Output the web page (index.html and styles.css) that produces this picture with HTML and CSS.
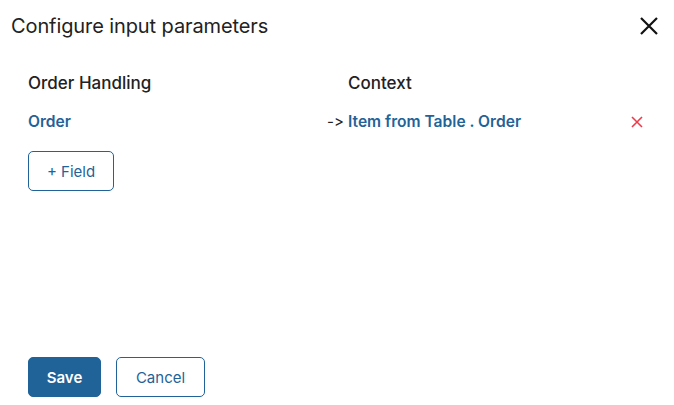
FILE: index.html
```html
<!DOCTYPE html>
<html>
<head>
<meta charset="utf-8">
<link rel="stylesheet" href="styles.css">
</head>
<body>
<div class="dialog">
  <div class="header">
    <div class="title">Configure input parameters</div>
    <button class="close" aria-label="Close">
      <svg width="18" height="18" viewBox="0 0 18 18"><path d="M1 1L17 17M17 1L1 17" stroke="#111" stroke-width="2.2" fill="none"/></svg>
    </button>
  </div>
  <div class="body">
    <div class="grid">
      <div class="th">Order Handling</div>
      <div class="th">Context</div>
      <div></div>
      <div class="link">Order</div>
      <div class="ctx"><span class="arrow">-&gt;</span><span class="link">Item from Table . Order</span></div>
      <div class="del"><svg width="12" height="12" viewBox="0 0 12 12"><path d="M1 1L11 11M11 1L1 11" stroke="#ee3b4a" stroke-width="1.6" fill="none"/></svg></div>
    </div>
    <button class="btn outline field">+ Field</button>
  </div>
  <div class="footer">
    <button class="btn primary">Save</button>
    <button class="btn outline">Cancel</button>
  </div>
</div>
</body>
</html>
```
FILE: styles.css
```css
html, body { margin: 0; padding: 0; background: #fff; }
body { font-family: Inter, "Noto Sans", sans-serif; color: #222; font-variant-ligatures: none; font-feature-settings: "calt" 0, "liga" 0; }
.dialog { width: 674px; height: 405px; display: flex; flex-direction: column; box-sizing: border-box; }
.header { display: flex; justify-content: space-between; align-items: center; padding: 12px 16px 0 11px; height: 28px; }
.title { font-size: 20px; font-weight: 400; color: #222; letter-spacing: -0.1px; }
.close { border: 0; background: none; padding: 0; width: 18px; height: 18px; display: flex; }
.body { flex: 1; padding: 33px 28px 0 28px; }
.grid { display: grid; grid-template-columns: 320px 1fr 15px; row-gap: 19px; align-items: center; }
.th { font-size: 17px; font-weight: 500; color: #222; }
.link { font-size: 15.6px; font-weight: 600; color: #1f6399; }
.ctx { display: flex; align-items: center; margin-left: -21px; }
.arrow { font-size: 15px; color: #222; width: 21px; font-feature-settings: "calt" 0; }
.del { display: flex; align-items: center; }
.btn { font-family: Inter, "Noto Sans", sans-serif; font-size: 15px; height: 40px; border-radius: 5px; box-sizing: border-box; padding: 0 17px; cursor: pointer; }
.outline { background: #fff; border: 1px solid #1f6399; color: #1f6399; }
.primary { background: #1f6399; border: 1px solid #1f6399; color: #fff; font-weight: 600; }
.field { margin-top: 20px; width: 86px; padding: 0; }
.footer { display: flex; gap: 15px; padding: 0 28px 8px 28px; }
.footer .primary { width: 73px; padding: 0; }
.footer .outline { width: 89px; padding: 0; }
```
